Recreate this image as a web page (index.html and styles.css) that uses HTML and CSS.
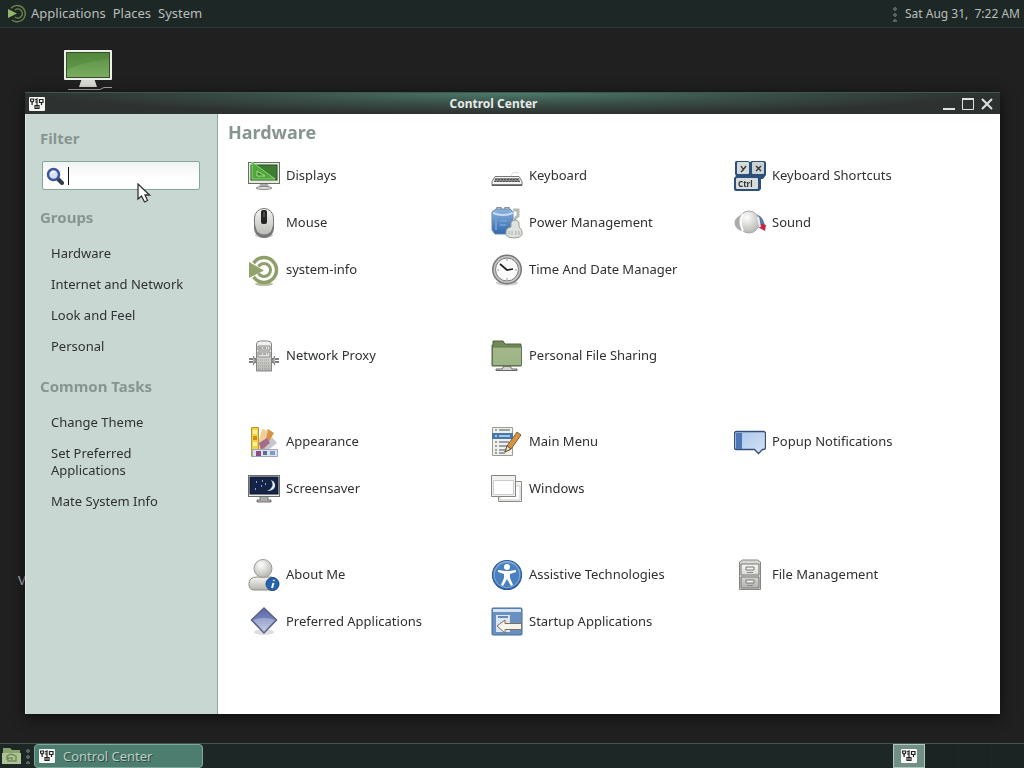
FILE: index.html
```html
<!DOCTYPE html>
<html lang="en">
<head>
<meta charset="utf-8">
<title>Control Center</title>
<link rel="stylesheet" href="styles.css">
</head>
<body>
<svg class="defs" aria-hidden="true">
  <defs>
    <linearGradient id="silver" x1="0" y1="0" x2="0" y2="1"><stop offset="0" stop-color="#f6f6f4"/><stop offset="1" stop-color="#b4b5b0"/></linearGradient>
    <linearGradient id="green" x1="0" y1="0" x2="0" y2="1"><stop offset="0" stop-color="#5a8f44"/><stop offset="1" stop-color="#79ac5e"/></linearGradient>
    <linearGradient id="folder" x1="0" y1="0" x2="0" y2="1"><stop offset="0" stop-color="#a3b78b"/><stop offset="1" stop-color="#9db584"/></linearGradient>
    <linearGradient id="blue" x1="0" y1="0" x2="0" y2="1"><stop offset="0" stop-color="#8db4de"/><stop offset="1" stop-color="#3267ab"/></linearGradient>
    <linearGradient id="pale" x1="0" y1="0" x2="1" y2="1"><stop offset="0" stop-color="#a9c4e8"/><stop offset="1" stop-color="#d5e3f5"/></linearGradient>
    <linearGradient id="violet" x1="0" y1="0" x2="0" y2="1"><stop offset="0" stop-color="#5a68ab"/><stop offset=".5" stop-color="#7784bb"/><stop offset="1" stop-color="#c9cfe4"/></linearGradient>
    <radialGradient id="ball" cx=".4" cy=".3" r=".7"><stop offset="0" stop-color="#ffffff"/><stop offset="1" stop-color="#b7b8b2"/></radialGradient>
    <symbol id="toolbox" viewBox="0 0 16 16">
      <rect y="1" width="16" height="14" rx="1" fill="#f6f6f4"/>
      <g fill="none" stroke="#222" stroke-width="1.200"><path d="M1.600 3h3v2l-1.500 1.500L1.600 5zM3.100 6.500V9M6 4l2-1v6M6 6h2M10.500 3.500h3.500v3h-3.500zM12.500 6.500V9M6 9.500h4v3H6zM8 9.500v3"/></g>
    </symbol>
  </defs>
</svg>

<header class="panel panel-top">
  <nav class="menus" aria-label="Main">
    <svg class="menu-logo" viewBox="0 0 20 20" aria-hidden="true"><path d="M1 5v9l9-4.500z" fill="#93b56c"/><path d="M4 4.200A8.200 8.200 0 1 1 5 16" fill="none" stroke="#668348" stroke-width="1.500"/><path d="M8 6A4.500 4.500 0 1 1 8 13" fill="none" stroke="#668348" stroke-width="1.500"/></svg>
    <button class="menu" type="button">Applications</button>
    <button class="menu" type="button">Places</button>
    <button class="menu" type="button">System</button>
  </nav>
  <div class="clock-area">
    <span class="grip"></span>
    <button class="clock" type="button">Sat Aug 31,&nbsp; 7:22 AM</button>
  </div>
</header>

<main class="desktop">
  <svg class="computer" viewBox="0 0 48 40" role="img" aria-label="Computer"><path d="M4 39.500h32l4-2h8" stroke="#aaa" fill="none"/><path d="M18 28h12l3 9H15z" fill="#d9dad5"/><rect width="48" height="30" rx="1" fill="#eeefe9"/><rect x="2" y="2" width="44" height="26" fill="#34502a"/><rect x="3" y="3" width="42" height="24" fill="url(#green)"/><path d="M3 3h42v6Q20 11 3 20z" fill="#417b2c" opacity=".3"/></svg>
  <span class="desktop-label">V</span>

  <section class="window" aria-label="Control Center">
    <div class="titlebar">
      <svg class="app-icon" viewBox="0 0 16 16" aria-hidden="true"><use href="#toolbox"/></svg>
      <h1 class="title">Control Center</h1>
      <div class="controls">
        <button type="button" aria-label="Minimize"><svg viewBox="0 0 14 14"><path d="M1 12h12" stroke-width="2"/></svg></button>
        <button type="button" aria-label="Maximize"><svg viewBox="0 0 14 14"><path d="M1.500 1v11.500h11V1"/><path d="M1 2h12" stroke-width="2"/></svg></button>
        <button type="button" aria-label="Close"><svg viewBox="0 0 14 14"><path d="M2 2l10 10M12 2L2 12" stroke-width="2"/></svg></button>
      </div>
    </div>
    <div class="content">
      <aside class="sidebar">
        <h2><label for="filter">Filter</label></h2>
        <div class="search">
          <svg viewBox="0 0 18 18" aria-hidden="true"><path d="M11 11l5 5" stroke="#333d52" stroke-width="4" stroke-linecap="round"/><circle cx="7.500" cy="7.500" r="5.500" fill="#d5e0f5" stroke="#3c559b" stroke-width="2.500"/><path d="M5 7q1-3 4-2" fill="none" stroke="#fff" stroke-width="1.500"/></svg>
          <span class="caret"></span>
          <input id="filter" type="text" autofocus>
        </div>
        <h2>Groups</h2>
        <ul>
          <li><a href="#hardware">Hardware</a></li>
          <li><a href="#internet">Internet and Network</a></li>
          <li><a href="#look">Look and Feel</a></li>
          <li><a href="#personal">Personal</a></li>
        </ul>
        <h2>Common Tasks</h2>
        <ul>
          <li><a href="#theme">Change Theme</a></li>
          <li><a href="#preferred">Set Preferred Applications</a></li>
          <li><a href="#info">Mate System Info</a></li>
        </ul>
      </aside>
      <div class="pane">
        <h2>Hardware</h2>
        <div class="group" id="hardware">
          <button class="launcher" type="button"><svg viewBox="0 0 32 32"><path d="M12 24h8l1 3H11z" fill="#aaa"/><ellipse cx="16" cy="28" rx="8" ry="1.500" fill="#ddd" stroke="#888"/><rect x=".5" y="2.500" width="31" height="21" fill="#e7e9e2" stroke="#65705d"/><rect x="3" y="5" width="26" height="15" fill="#3e7e32" stroke="#28501f"/><path d="M4 2v17h23z" fill="#50a83a" stroke="#8bd977"/><path d="M9 11v5h8z" fill="#3e7e32" stroke="#a0e090"/></svg>Displays</button>
          <button class="launcher" type="button"><svg viewBox="0 0 32 32"><path d="M20 16q1-5 8-3" stroke="#ddd" fill="none"/><path d="M4 16.500h24l3 5v4H1v-4z" fill="#f5f5f5" stroke="#777"/><path d="M4 18h24l1 4H3z" fill="#888"/><path d="M4 19.500h24M3 21.500h26" stroke="#555" stroke-dasharray="2 1"/><path d="M1 25h30" stroke="#555" stroke-width="1.500"/></svg>Keyboard</button>
          <button class="launcher" type="button"><svg viewBox="0 0 32 32"><path d="M2 1h12l2 1 2-1h12q2 0 2 2v12l-3 4h-2v10l-2 2H2q-2 0-2-2V18l2-2-1-2V2z" fill="#2b507c"/><rect x="3" y="2" width="12" height="12" rx="1" fill="#d5dbd9"/><rect x="18" y="2" width="12" height="12" rx="1" fill="#cbd3d2"/><rect x="2" y="18" width="22" height="11" rx="1" fill="#d8dddb"/><path d="M7 6l2 3m3-3l-3 4-2 2M22 6l5 5m0-5l-5 5" stroke="#333" stroke-width="1.300" fill="none"/><text x="4" y="27" class="key-label">Ctrl</text></svg>Keyboard Shortcuts</button>
          <button class="launcher" type="button"><svg viewBox="0 0 32 32"><ellipse cx="16" cy="28" rx="9" ry="3" fill="#ccc"/><rect x="6.500" y="1.500" width="19" height="29" rx="9.500" fill="url(#silver)" stroke="#777"/><path d="M6.500 15v7q1 8 9.500 8.500T25.500 22v-7q-1 7-3 10-6 5-13 0-2-4-3-10z" fill="#777"/><rect x="13" y="3" width="6" height="14" rx="2" fill="#252525"/><path d="M16 5v5" stroke="#777"/></svg>Mouse</button>
          <button class="launcher" type="button"><svg viewBox="0 0 32 32"><path d="M1 5l4-3h14l3 3v19l-4 3H4l-3-4z" fill="url(#blue)" stroke="#6489b3"/><path d="M2 6q10 4 20 0" stroke="#cadcf0" stroke-width="2" fill="none"/><path d="M6 2V0h4v2m4 0V0h4v2" fill="#bbb" stroke="#777"/><path d="M5 11v12M9 14h7M9 18h6" stroke="#6e9dd2" stroke-width="2"/><path d="M22 3h5v6q-4 2-4 7" fill="none" stroke="#b3bdb7" stroke-width="3"/><path d="M20 16q1-3 4-3t4 3v4q3 2 3 5v3q-2 3-8 3t-8-3v-3q0-4 5-5z" fill="#dfe3df" stroke="#97a09a"/><path d="M18 24v4m3-4v4m4-4v4m3-4v4" stroke="#a7ada9"/></svg>Power Management</button>
          <button class="launcher" type="button"><svg viewBox="0 0 32 32"><path d="M20 7q8 0 11 11l-5 1z" fill="#5379a9"/><path d="M24 16l8 2-1 6-7-4z" fill="#c52642"/><ellipse cx="11" cy="16" rx="10.500" ry="8.500" fill="#aaa"/><ellipse cx="15" cy="15" rx="10.500" ry="11" fill="url(#ball)" stroke="#aaa"/><path d="M9 7q-4 9 0 17" stroke="#fff" stroke-width="2" fill="none"/><path d="M24 10l2 10" stroke="#e9eef6" stroke-width="2"/></svg>Sound</button>
          <button class="launcher" type="button"><svg viewBox="0 0 32 32"><ellipse cx="16" cy="30" rx="9" ry="2" fill="#b7c2a0"/><circle cx="16" cy="16" r="12.500" fill="none" stroke="#8f9f69" stroke-width="3.500"/><circle cx="16" cy="16" r="6.500" fill="none" stroke="#8f9f69" stroke-width="3"/><path d="M0 5l15 11L0 27z" fill="#fff"/><path d="M1 8l15 8.500L1 24z" fill="#93a36c"/></svg>system-info</button>
          <button class="launcher" type="button"><svg viewBox="0 0 32 32"><ellipse cx="16" cy="29" rx="11" ry="2.500" fill="#ccc"/><circle cx="16" cy="15.500" r="15" fill="#777"/><circle cx="16" cy="15.500" r="13.500" fill="#c6c6c4"/><circle cx="16" cy="15.500" r="11.500" fill="#fafafa" stroke="#777"/><path d="M9 10l7 6 6-1" stroke="#222" stroke-width="1.700" fill="none"/><path d="M16 5v2m0 17v2M6 16h2m16 0h2" stroke="#999"/></svg>Time And Date Manager</button>
        </div>
        <div class="group" id="internet">
          <button class="launcher" type="button"><svg viewBox="0 0 32 32"><path d="M1 19h8M1 22h8m14-3h8m-8 3h8" stroke="#555" stroke-width="1.300"/><path d="M5 16l3 4.500L5 25m22-9l-3 4.500 3 4.500" fill="#aaa" stroke="#777"/><path d="M8.500 31V4q0-3 4-3h7q4 0 4 3v27z" fill="url(#silver)" stroke="#858585"/><path d="M10 6h12v4H10zM10 12h12v5H10z" fill="#e7e7e4" stroke="#888"/><path d="M11 8h9M11 14h9" stroke="#666" stroke-dasharray="3 1"/><path d="M10 20h12m-12 3h12m-12 3h12m-12 3h12" stroke="#999" stroke-dasharray="1 1"/></svg>Network Proxy</button>
          <button class="launcher" type="button"><svg viewBox="0 0 32 32"><path d="M13 26h6l2 3h5v1.500H5V29h6z" fill="#d3d3d0" stroke="#666"/><path d="M2 5V1h10l2 3h16v22H1V5z" fill="#708b59" stroke="#4c623c"/><path d="M1.500 7h29v18.500h-29z" fill="url(#folder)" stroke="#60754f"/></svg>Personal File Sharing</button>
        </div>
        <div class="group" id="look">
          <button class="launcher" type="button"><svg viewBox="0 0 32 32"><path d="M13 20l11-9 5 6-10 8z" fill="#c8c5cc"/><path d="M10 20L20 3l6 4-11 18z" fill="#d69345"/><path d="M9 22L14 3l6 2-5 19z" fill="#f0ce9a"/><path d="M11 17l8-5 3 5-9 7z" fill="#a36c8e"/><path d="M3.500 1.500h7v29h-7z" fill="#f5d23d" stroke="#b39935"/><path d="M5 4h4v4H5zm0 12h4v4H5z" fill="#fff2a4"/><path d="M5 10h4v4H5z" fill="#cf8e21"/><path d="M4.500 23.500h25v7h-25z" fill="#dce2ee" stroke="#9ca6bd"/><path d="M8 25h5v5H8z" fill="#8a4d88"/><path d="M15 25h4v4h-4z" fill="#586ea5"/><path d="M22 25h5v4h-5z" fill="#809ac5"/></svg>Appearance</button>
          <button class="launcher" type="button"><svg viewBox="0 0 32 32"><path d="M1.500 1.500h20v28h-20z" fill="#f2f1e9" stroke="#9b9b94"/><path d="M1 7h21v6H1z" fill="#4778ac"/><path d="M4 4h2m2 0h11M4 16h2m2 0h10M4 20h2m2 0h9M4 24h2m2 0h8M4 27h2m2 0h6" stroke="#7b8793" stroke-width="1.500"/><path d="M4 10h2m2 0h11" stroke="#a8c5e5" stroke-width="2"/><path d="M14 26l2-6L26 6l4 3-10 14z" fill="#d99442" stroke="#7b5b35"/><path d="M14 26l2-6 4 3z" fill="#efe1bd" stroke="#5e5242"/></svg>Main Menu</button>
          <button class="launcher" type="button"><svg viewBox="0 0 32 32"><path d="M2.500 5.500h27q2 0 2 2v14q0 2-2 2h-1l-4 4-4-4h-18q-2 0-2-2v-14q0-2 2-2z" fill="url(#pale)" stroke="#354f79" stroke-width="1.300"/><path d="M2 7h6v16H2z" fill="#4c78b8"/></svg>Popup Notifications</button>
          <button class="launcher" type="button"><svg viewBox="0 0 32 32"><path d="M12 23h8v4h3v2H9v-2h3z" fill="#aaa" stroke="#777"/><rect x=".5" y="2.500" width="31" height="21" fill="#ecece8" stroke="#66706a"/><rect x="2" y="4" width="28" height="17" fill="#152347" stroke="#101528"/><path d="M23 7q5 7-4 11 9 0 8-7-1-3-4-4z" fill="#e9edf7"/><path d="M8 9h1m5-1h1m-2 5h1m-7 3h1m9-5h1" stroke="#83a7de" stroke-width="2"/></svg>Screensaver</button>
          <button class="launcher" type="button"><svg viewBox="0 0 32 32"><path d="M7.500 8.500h23v20h-23z" fill="#f4f4f2" stroke="#8c8c88"/><path d="M9 13h20v14H9z" fill="#fff" stroke="#ccc"/><path d="M.5 2.500h24v21H.5z" fill="#f1f1ef" stroke="#858581"/><path d="M2.500 7.500h20v14h-20z" fill="#fff" stroke="#ccc"/></svg>Windows</button>
        </div>
        <div class="group" id="personal">
          <button class="launcher" type="button"><svg viewBox="0 0 32 32"><path d="M1 25q0-7 8-7h14q7 1 7 8 0 5-5 5H6q-5 0-5-6z" fill="url(#silver)" stroke="#8c8c83"/><circle cx="15" cy="9.500" r="9" fill="url(#ball)" stroke="#999b91"/><circle cx="24.500" cy="25" r="6.500" fill="#2364ac" stroke="#174682"/><path d="M25.500 24l-1.500 5m2-8l-.3 1" stroke="#fff" stroke-width="2"/></svg>About Me</button>
          <button class="launcher" type="button"><svg viewBox="0 0 32 32"><circle cx="16" cy="16" r="14.500" fill="url(#blue)" stroke="#285b99" stroke-width="1.200"/><circle cx="16" cy="16" r="12.800" fill="#4a80bd" stroke="#80aad8"/><circle cx="16" cy="8" r="3" fill="#fff"/><path d="M7 11l7 1h4l7-1v2l-6 2v4l3 7-2 1-4-7-4 7-2-1 3-7v-4l-6-2z" fill="#fff"/></svg>Assistive Technologies</button>
          <button class="launcher" type="button"><svg viewBox="0 0 32 32"><path d="M5.500 30.500V3l3-2h15l3 2v27.500z" fill="#d8d8d5" stroke="#858582"/><path d="M7 5h18v11H7zm0 13h18v11H7z" fill="url(#silver)" stroke="#777"/><path d="M12 8h8v3h-8zm0 13h8v3h-8z" fill="#f5f5f2" stroke="#777"/><path d="M13 13.500h6m-6 13h6" stroke="#888"/></svg>File Management</button>
          <button class="launcher" type="button"><svg viewBox="0 0 32 32"><ellipse cx="16" cy="26" rx="10" ry="3" fill="#ddd"/><path d="M16 2l12.500 12L16 27 3.500 14z" fill="url(#violet)" stroke="#5b6282" stroke-width="1.500"/><path d="M5 14q11-4 22 0l-11 11z" fill="#c7d0ea" opacity=".5"/></svg>Preferred Applications</button>
          <button class="launcher" type="button"><svg viewBox="0 0 32 32"><rect x="1" y="2" width="30" height="27" rx="1" fill="#6891c2" stroke="#426b9b"/><path d="M2 3h28v3H2z" fill="#d7e3ef"/><path d="M5 9h14v17H5z" fill="#dbe6f2"/><path d="M7 11h10" stroke="#426b9b" stroke-width="1.500"/><path d="M6 20l8-6v3.500h16.500v6H14V27z" fill="#f5f4ed" stroke="#80705b"/></svg>Startup Applications</button>
        </div>
      </div>
    </div>
  </section>
  <svg class="pointer" viewBox="0 0 14 20" aria-hidden="true"><path d="M1 1v15l3.500-3 3 6 3-1.500L8 12h4.500z" fill="#fff" stroke="#333" stroke-width="1.300"/></svg>
</main>

<footer class="panel panel-bottom">
  <button class="show-desktop" type="button" aria-label="Files"><svg viewBox="0 0 20 18"><path d="M1 1h7l2 2h8v13H1z" fill="#8ba36f"/><path d="M0 6h19v11H0z" fill="#adc393"/><path d="M5 13V9l4-2 5 2v5H6v-3h4v2" fill="none" stroke="#748d5c" stroke-width="1.500"/></svg></button>
  <span class="grip"></span>
  <button class="task" type="button"><svg class="app-icon" viewBox="0 0 16 16" aria-hidden="true"><use href="#toolbox"/></svg>Control Center</button>
  <div class="workspaces">
    <button class="active" type="button" aria-label="Workspace 1"><svg class="app-icon" viewBox="0 0 16 16"><use href="#toolbox"/></svg></button>
    <button type="button" aria-label="Workspace 2"></button>
    <button type="button" aria-label="Workspace 3"></button>
    <button type="button" aria-label="Workspace 4"></button>
  </div>
</footer>
</body>
</html>
```
FILE: styles.css
```css
* { box-sizing: border-box; }

body {
  margin: 0;
  min-height: 100vh;
  display: flex;
  flex-direction: column;
  background: #202020;
  color: #2e3032;
  font: 13px/17px "Noto Sans", "Open Sans", sans-serif;
}

button {
  margin: 0;
  padding: 0;
  border: 0;
  background: none;
  color: inherit;
  font: inherit;
}

h1, h2, ul { margin: 0; padding: 0; }
ul { list-style: none; }
a { color: inherit; text-decoration: none; }
svg { display: block; flex: none; }
.defs { position: absolute; width: 0; height: 0; }

.panel { display: flex; align-items: center; background: #1d2725; color: #b9bebb; }
.panel-top { height: 28px; justify-content: space-between; border-bottom: 1px solid #2d3a37; }
.panel-bottom { height: 25px; gap: 4px; border-top: 1px solid #46534f; }
.menus { display: flex; align-items: center; gap: 7px; padding-left: 7px; }
.menu-logo { width: 20px; height: 20px; margin-right: -3px; }
.clock-area { display: flex; align-items: center; gap: 8px; padding-right: 4px; }
.clock { font-size: 12px; }
.grip {
  width: 4px;
  height: 16px;
  background: radial-gradient(circle, #59625f 2px, transparent 2px) 0 0 / 4px 6px;
}

.desktop { position: relative; flex: 1; min-height: 680px; }
.computer { position: absolute; left: 64px; top: 22px; width: 48px; height: 40px; }
.desktop-label { position: absolute; left: 18px; top: 544px; color: #ccc; }
.pointer { position: absolute; left: 137px; top: 155px; width: 14px; height: 20px; }

.window {
  position: absolute;
  inset: 64px 24px 29px 25px;
  display: flex;
  flex-direction: column;
  box-shadow: 0 3px 12px #0c0c0c;
}
.titlebar {
  display: flex;
  align-items: center;
  height: 22px;
  padding: 0 6px 0 4px;
  border-top: 1px solid #3b5950;
  background: radial-gradient(ellipse at 50% 0, #4c7a6a 0, #3a5049 35%, #2d3130 70%);
  color: #e6e9e8;
}
.app-icon { width: 16px; height: 16px; }
.title { flex: 1; text-align: center; font-size: 12px; line-height: 17px; font-weight: 700; }
.controls { display: flex; gap: 5px; }
.controls svg { width: 14px; height: 14px; fill: none; stroke: #e0e2e1; }

.content { flex: 1; display: flex; background: #fff; }
.sidebar {
  width: 193px;
  padding: 13px 15px 13px 14px;
  background: #c9d7d2;
  border-left: 1px solid #dfe9e5;
  border-right: 1px solid #92a49d;
}
h2 { color: #879590; font-size: 15px; line-height: 22px; }
.sidebar h2 { margin-bottom: 10px; }
.sidebar ul { padding: 0 8px 0 11px; margin-bottom: 13px; }
.sidebar a { display: block; padding: 7px 0; }
.search {
  display: flex;
  align-items: center;
  gap: 4px;
  height: 29px;
  margin: 12px 2px 16px;
  padding: 0 3px;
  border: 1px solid #7fa899;
  border-radius: 2px;
  background: linear-gradient(#f1f3f2, #fff 60%);
}
.search svg { width: 18px; height: 18px; }
.caret { width: 1px; height: 18px; background: #111; }
.search input {
  flex: 1;
  min-width: 0;
  height: 21px;
  padding: 0;
  border: 0;
  outline: 0;
  background: none;
  font: 15px/19px "Noto Sans", sans-serif;
  color: #111;
  caret-color: transparent;
}

.pane { flex: 1; padding: 6px 23px 6px 10px; }
.pane h2 { margin-bottom: 8px; font-size: 18px; line-height: 24px; }
.group {
  display: grid;
  grid-template-columns: repeat(3, 1fr);
  grid-auto-rows: 47px;
  margin: 0 0 39px 20px;
}
.launcher { display: flex; align-items: center; gap: 6px; text-align: left; }
.launcher svg { width: 32px; height: 32px; }
.key-label { font: 700 8px "Noto Sans", sans-serif; fill: #333; }

.show-desktop { margin-left: 2px; }
.show-desktop svg { width: 20px; height: 18px; }
.task {
  display: flex;
  align-items: center;
  gap: 8px;
  width: 169px;
  height: 24px;
  padding: 0 4px;
  border: 1px solid #7da99a;
  border-radius: 4px;
  background: #4d7d6e;
  color: #bccdc6;
  text-shadow: 1px 1px 0 #2c4b41;
}
.workspaces { display: flex; gap: 1px; margin-left: auto; align-self: stretch; }
.workspaces button { display: flex; align-items: center; justify-content: center; width: 32px; background: #1b2422; }
.workspaces .active { border: 1px solid #b1c7bf; background: #718f85; }
```
